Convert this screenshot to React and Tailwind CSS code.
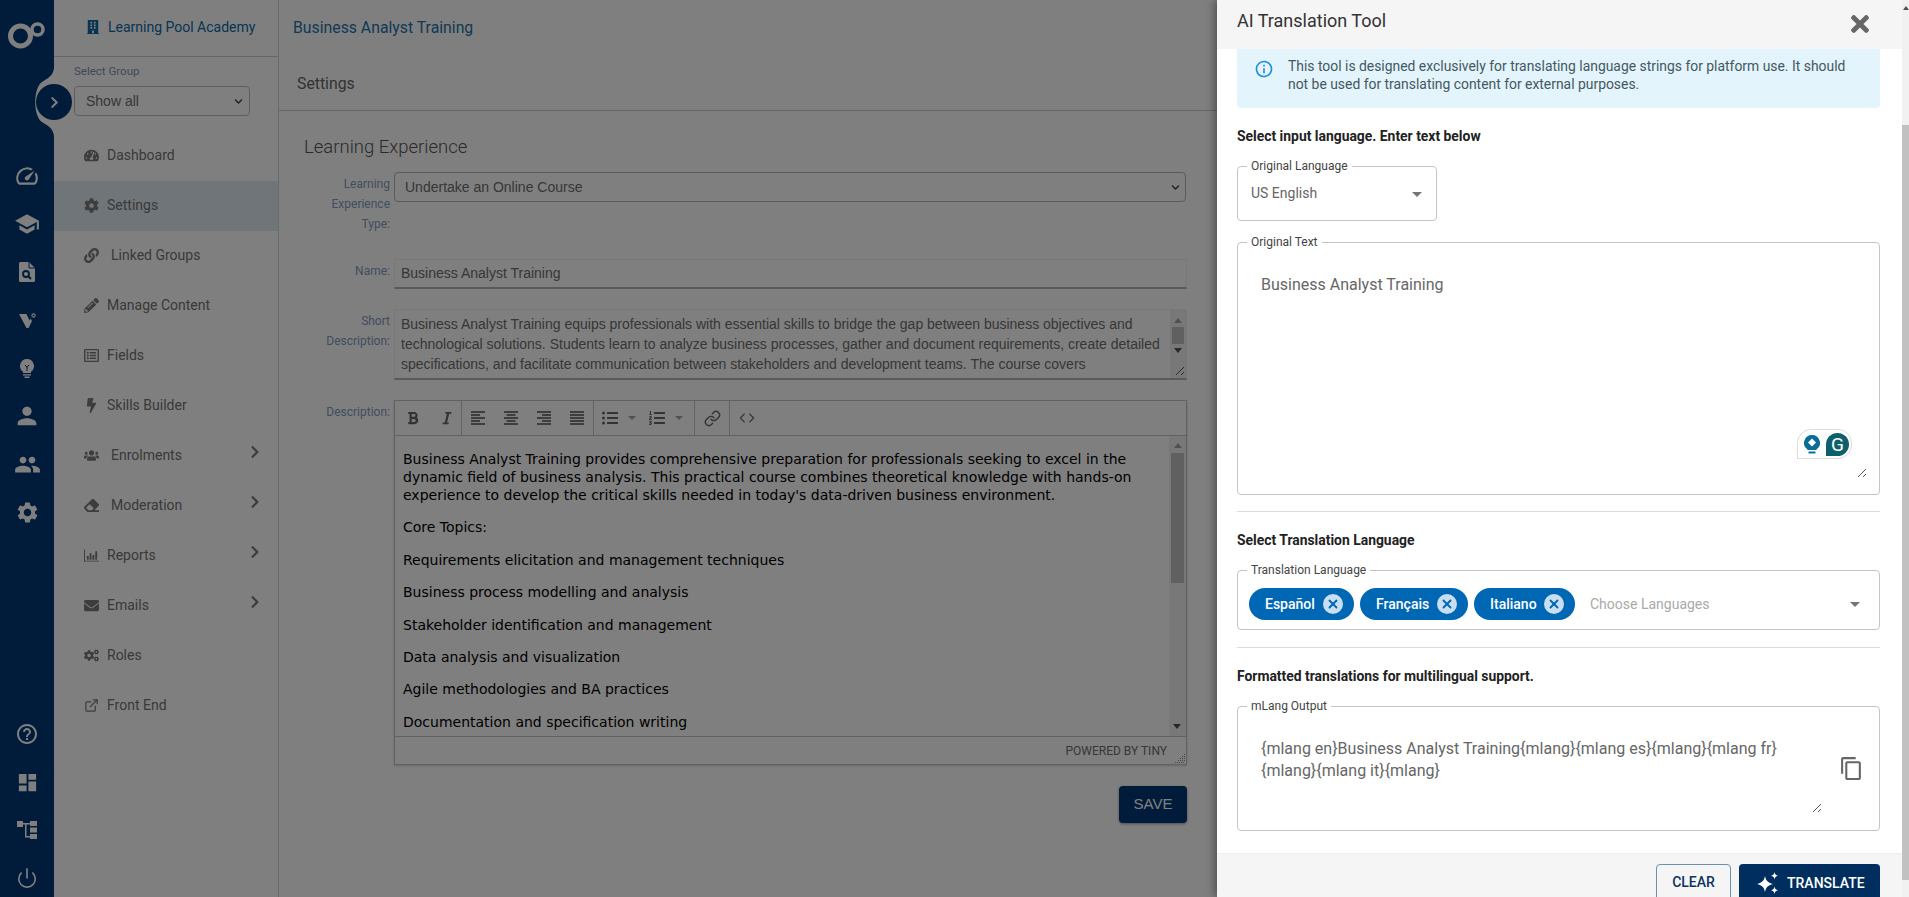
import React from "react";
import {
  FaTachometerAlt, FaCog, FaLink, FaPencilAlt, FaRegListAlt, FaBolt, FaUsers, FaEraser,
  FaEnvelope, FaCogs, FaChevronRight, FaBuilding, FaTimes,
  FaBold, FaItalic, FaListUl, FaListOl, FaChevronDown,
} from "react-icons/fa";
import {
  MdPerson, MdPeople, MdSettings, MdHelpOutline, MdDashboard, MdSpeed, MdSchool,
  MdOutlineContentCopy, MdOutlineInfo,
} from "react-icons/md";
import { Power, X, Link, Code, ExternalLink } from "lucide-react";

function ChartIcon() {
  return (
    <svg width="16" height="13" viewBox="0 0 16 13" fill="currentColor">
      <path d="M0 0h1v12h15v1H0zM3 7h2v4H3zM6 4h2v7H6zM9 6h2v5H9zM12 2h2v9h-2z" />
    </svg>
  );
}

const NAV = [
  { label: "Dashboard", icon: FaTachometerAlt },
  { label: "Settings", icon: FaCog, active: true },
  { label: "Linked Groups", icon: FaLink, wide: true },
  { label: "Manage Content", icon: FaPencilAlt },
  { label: "Fields", icon: FaRegListAlt },
  { label: "Skills Builder", icon: FaBolt },
  { label: "Enrolments", icon: FaUsers, wide: true, arrow: true },
  { label: "Moderation", icon: FaEraser, wide: true, arrow: true },
  { label: "Reports", icon: ChartIcon, arrow: true },
  { label: "Emails", icon: FaEnvelope, arrow: true },
  { label: "Roles", icon: FaCogs },
  { label: "Front End", icon: ExternalLink },
];

const TOPICS = [
  "Core Topics:",
  "Requirements elicitation and management techniques",
  "Business process modelling and analysis",
  "Stakeholder identification and management",
  "Data analysis and visualization",
  "Agile methodologies and BA practices",
  "Documentation and specification writing",
];

function Logo() {
  return (
    <svg width="38" height="27" viewBox="0 0 38 27" fill="none" stroke="#fff">
      <circle cx="12.5" cy="14" r="10" strokeWidth="5" />
      <circle cx="29.5" cy="7.5" r="5.5" strokeWidth="3.5" />
    </svg>
  );
}

function VMark() {
  return (
    <svg width="17" height="15" viewBox="0 0 17 15" fill="#fff">
      <path d="M0 1h7.500l3 6.500 1-2 1.500 2.500-3.500 7H7.500z" />
      <circle cx="14.500" cy="2.500" r="1.600" fill="none" stroke="#fff" strokeWidth="1.100" />
    </svg>
  );
}

function TreeMark() {
  return (
    <svg width="20" height="18" viewBox="0 0 20 18" fill="#fff">
      <path d="M0 0h6v6H0zM13 0h7v5h-7zM13 6.500h7v5h-7zM13 13h7v5h-7z" />
      <path d="M6 2h7v1.500H9.500V15H13v1.500H8V3.500H6z" />
    </svg>
  );
}

function DocSearch() {
  return (
    <svg width="16" height="20" viewBox="0 0 16 20">
      <path d="M1.500 0H10l6 6v12.500a1.500 1.500 0 0 1-1.500 1.500h-13A1.500 1.500 0 0 1 0 18.500v-17A1.500 1.500 0 0 1 1.500 0z" fill="#fff" />
      <path d="M10 0v6h6" fill="none" stroke="#003874" strokeWidth="1" />
      <circle cx="7" cy="12" r="3" fill="none" stroke="#003874" strokeWidth="1.800" />
      <line x1="9.200" y1="14.200" x2="12" y2="17" stroke="#003874" strokeWidth="2" />
    </svg>
  );
}

function BulbMark() {
  return (
    <svg width="14" height="19" viewBox="0 0 14 19">
      <path d="M7 0a7 7 0 0 1 4 12.700V14H3v-1.300A7 7 0 0 1 7 0z" fill="#fff" />
      <path d="M3 15.200h8v1.300H3zM4.500 17.500h5V19h-5z" fill="#fff" />
      <path d="M5 6l2 2.200L9 6M7 8v4" fill="none" stroke="#003874" strokeWidth="1" />
    </svg>
  );
}

function RailIcon({ children }) {
  return <div className="flex h-[48px] w-full items-center justify-center text-white">{children}</div>;
}

function Rail() {
  return (
    <aside className="flex h-full w-[54px] shrink-0 flex-col items-center bg-[#003874]">
      <div className="mt-[22px] h-[130px]">
        <Logo />
      </div>
      <RailIcon><MdSpeed size={26} /></RailIcon>
      <RailIcon><MdSchool size={26} /></RailIcon>
      <RailIcon><DocSearch /></RailIcon>
      <RailIcon><VMark /></RailIcon>
      <RailIcon><BulbMark /></RailIcon>
      <RailIcon><MdPerson size={28} /></RailIcon>
      <RailIcon><MdPeople size={27} /></RailIcon>
      <RailIcon><MdSettings size={25} /></RailIcon>
      <div className="mt-auto mb-[-5px] flex w-full flex-col">
        <RailIcon><MdHelpOutline size={24} /></RailIcon>
        <RailIcon><MdDashboard size={23} /></RailIcon>
        <RailIcon><TreeMark /></RailIcon>
        <RailIcon><Power size={22} strokeWidth={1.8} /></RailIcon>
      </div>
    </aside>
  );
}

function RailToggle() {
  return (
    <>
      <svg className="absolute left-[30px] top-[68px]" width="24" height="68" viewBox="0 0 24 68" fill="#fff">
        <path d="M24 0c-1 8-6 10-12 14C3 20 3 48 12 54c6 4 11 6 12 14z" />
      </svg>
      <div className="absolute left-[36px] top-[84px] flex h-[36px] w-[36px] items-center justify-center rounded-full bg-[#003874] text-white">
        <FaChevronRight size={13} />
      </div>
    </>
  );
}

function Sidebar() {
  return (
    <nav className="h-full w-[225px] shrink-0 border-r border-[#d4d4d4] bg-white">
      <div className="flex h-[57px] items-center gap-[10px] border-b border-[#cfcfcf] pb-[2px] pl-[32px] font-['Roboto'] text-[14px] text-[#0d6aa8]">
        <FaBuilding size={14} />
        <span className="-ml-[2px]">Learning Pool Academy</span>
      </div>
      <div className="pl-[20px] pt-[7px]">
        <div className="font-['Roboto'] text-[11.5px] leading-[14px] text-[#7d93ae]">Select Group</div>
        <div className="mt-[8px] flex h-[30px] w-[176px] items-center justify-between rounded-[4px] border border-[#bdbdbd] pl-[11px] pr-[6px] font-['Liberation_Sans'] text-[14px] text-[#6e6e6e]">
          Show all
          <FaChevronDown size={9} className="text-[#444]" />
        </div>
      </div>
      <ul className="mt-[15px]">
        {NAV.map((item) => (
          <li
            key={item.label}
            className={`relative flex h-[50px] items-center pb-[2px] pl-[30px] font-['Roboto'] text-[14px] text-[#737373] ${item.active ? "bg-[#dfebf3]" : ""}`}
          >
            <span className="flex w-[15px] justify-center text-[14px] text-[#7a7a7a]"><item.icon size={15} /></span>
            <span className={item.wide ? "ml-[12px]" : "ml-[8px]"}>{item.label}</span>
            {item.arrow && <FaChevronRight size={14} className="absolute left-[194px] top-[14px] text-[#7a7a7a]" />}
          </li>
        ))}
      </ul>
    </nav>
  );
}

function Bars({ kind }) {
  const lines = {
    left: [[1, 14], [1, 9], [1, 14], [1, 9], [1, 14]],
    center: [[1, 14], [3.5, 9], [1, 14], [3.5, 9], [1, 14]],
    right: [[1, 14], [6, 9], [1, 14], [6, 9], [1, 14]],
    justify: [[1, 14], [1, 14], [1, 14], [1, 14], [1, 14]],
  }[kind];
  return (
    <svg width="16" height="14" viewBox="0 0 16 14" stroke="#666" strokeWidth="1.7">
      {lines.map(([x, w], i) => <line key={i} x1={x} x2={x + w} y1={1 + i * 3} y2={1 + i * 3} />)}
    </svg>
  );
}

function Caret() {
  return <span className="ml-[10px] h-0 w-0 border-x-[4px] border-t-[4px] border-x-transparent border-t-[#a3a3a3]" />;
}

function Editor() {
  return (
    <div className="h-[365px] w-[793px] border border-[#c4c4c4] shadow-[0_1px_2px_rgba(0,0,0,.2)]">
      <div className="flex h-[35px] items-center border-b border-[#c4c4c4] text-[#666]">
        <div className="flex h-full w-[67px] items-center gap-[20px] border-r border-[#c9c9c9] pl-[11px] text-[14px]">
          <FaBold /><FaItalic />
        </div>
        <div className="flex h-full w-[132px] items-center justify-between border-r border-[#c9c9c9] px-[8px]">
          <Bars kind="left" /><Bars kind="center" /><Bars kind="right" /><Bars kind="justify" />
        </div>
        <div className="flex h-full w-[101px] items-center border-r border-[#c9c9c9] pl-[8px] text-[16px]">
          <FaListUl />
          <Caret />
          <FaListOl className="ml-[13px]" />
          <Caret />
        </div>
        <div className="flex h-full w-[35px] items-center justify-center border-r border-[#c9c9c9]">
          <Link size={17} />
        </div>
        <Code size={16} strokeWidth={1.6} className="ml-[9px]" />
      </div>
      <div className="relative h-[301px] overflow-hidden border-b border-[#c4c4c4] px-[8px] pt-[14px] font-['DejaVu_Sans'] text-[14px] leading-[18px] text-black">
        <p className="w-[760px]">
          Business Analyst Training provides comprehensive preparation for professionals seeking to excel in the dynamic field of business analysis. This practical course combines theoretical knowledge with hands-on experience to develop the critical skills needed in today's data-driven business environment.
        </p>
        {TOPICS.map((t) => <p key={t} className="mt-[14.4px]">{t}</p>)}
        <div className="absolute inset-y-0 right-0 w-[17px] bg-[#f1f1f1]">
          <div className="mx-auto mt-[7px] h-0 w-0 border-x-[4px] border-b-[5px] border-x-transparent border-b-[#a3a3a3]" />
          <div className="ml-[2px] mt-[5px] h-[130px] w-[13px] bg-[#c1c1c1]" />
          <div className="absolute bottom-[7px] left-[4px] h-0 w-0 border-x-[4px] border-t-[5px] border-x-transparent border-t-[#505050]" />
        </div>
      </div>
      <div className="relative flex h-[27px] items-center justify-end pr-[19px] font-['Roboto'] text-[12px] text-[#6e6e6e]">
        POWERED BY TINY
        <svg className="absolute bottom-[1px] right-[1px]" width="10" height="10" viewBox="0 0 10 10" fill="none" stroke="#888" strokeWidth="1" strokeDasharray="1 1">
          <path d="M0 9.500h10M3 7.500h7M5 5.500h5M7 3.500h3M9 1.500h1" />
        </svg>
      </div>
    </div>
  );
}

function FormLabel({ children }) {
  return <div className="w-[112px] shrink-0 pr-[4px] pt-[2px] text-right font-['Roboto'] text-[12px] leading-[20px] text-[#7f9cc0]">{children}</div>;
}

function Main() {
  return (
    <main className="h-full min-w-0 flex-1 bg-white">
      <div className="flex h-[56px] items-center pl-[14px] font-['Roboto'] text-[15.8px] text-[#1f72aa]">Business Analyst Training</div>
      <div className="flex h-[55px] items-center border-b border-[#cfcfcf] pl-[18px] pt-[1px] font-['Roboto'] text-[15.8px] text-[#666]">Settings</div>
      <div className="pl-[3px]">
        <h2 className="pl-[22px] pt-[24px] font-['Roboto'] text-[18.5px] font-light leading-[24px] text-[#555]">Learning Experience</h2>
        <div className="mt-[13px] flex">
          <FormLabel>Learning<br />Experience<br />Type:</FormLabel>
          <div className="flex h-[30px] w-[792px] items-center justify-between rounded-[4px] border border-[#b5b5b5] pl-[10px] pr-[5px] font-['Liberation_Sans'] text-[14px] text-[#6e6e6e]">
            Undertake an Online Course
            <FaChevronDown size={9} className="text-[#444]" />
          </div>
        </div>
        <div className="mt-[25px] flex">
          <FormLabel>Name:</FormLabel>
          <div className="flex h-[30px] w-[793px] items-center border border-b-2 border-[#f0f0f0] border-b-[#b5b5b5] pl-[6px] font-['Liberation_Sans'] text-[14px] text-[#6e6e6e]">
            Business Analyst Training
          </div>
        </div>
        <div className="mt-[20px] flex">
          <FormLabel>Short<br />Description:</FormLabel>
          <div className="relative h-[71px] w-[793px] overflow-hidden border border-b-2 border-[#f0f0f0] border-b-[#b5b5b5] pl-[6px] pt-[4px] font-['Liberation_Sans'] text-[14px] leading-[20px] text-[#6e6e6e]">
            <p className="w-[770px]">
              Business Analyst Training equips professionals with essential skills to bridge the gap between business objectives and technological solutions. Students learn to analyze business processes, gather and document requirements, create detailed specifications, and facilitate communication between stakeholders and development teams. The course covers
            </p>
            <div className="absolute inset-y-0 right-0 w-[16px] bg-[#f1f1f1]">
              <div className="mx-auto mt-[8px] h-0 w-0 border-x-[4px] border-b-[5px] border-x-transparent border-b-[#a3a3a3]" />
              <div className="ml-[2px] mt-[4px] h-[17px] w-[12px] bg-[#c1c1c1]" />
              <div className="mx-auto mt-[4px] h-0 w-0 border-x-[4px] border-t-[5px] border-x-transparent border-t-[#505050]" />
            </div>
            <ResizeGrip className="absolute bottom-[2px] right-[1px]" />
          </div>
        </div>
        <div className="mt-[20px] flex">
          <FormLabel>Description:</FormLabel>
          <Editor />
        </div>
        <div className="mt-[21px] flex w-[905px] justify-end">
          <button className="h-[37px] w-[68px] rounded-[4px] bg-[#003874] font-['Liberation_Sans'] text-[15px] text-white shadow-[0_1px_3px_rgba(0,0,0,.4)]">SAVE</button>
        </div>
      </div>
    </main>
  );
}

function ResizeGrip({ className = "" }) {
  return (
    <svg className={className} width="10" height="10" viewBox="0 0 10 10" stroke="#555" strokeWidth="1">
      <line x1="1" y1="9" x2="9" y2="1" />
      <line x1="6" y1="9" x2="9" y2="6" />
    </svg>
  );
}

function Outlined({ label, className = "", children }) {
  return (
    <div className={`relative rounded-[4px] border border-[#c4c4c4] ${className}`}>
      <span className="absolute -top-[8px] left-[9px] bg-white px-[4px] font-['Roboto'] text-[12px] leading-[14px] text-[#444]">{label}</span>
      {children}
    </div>
  );
}

function Arrow({ className = "" }) {
  return <span className={`h-0 w-0 border-x-[5px] border-t-[5px] border-x-transparent border-t-[#757575] ${className}`} />;
}

function Chip({ label, width }) {
  return (
    <div className={`flex h-[32px] items-center justify-between rounded-full bg-[#0067b5] pl-[16px] pr-[11px] font-['Roboto'] text-[14px] font-medium text-white ${width}`}>
      {label}
      <span className="flex h-[20px] w-[20px] items-center justify-center rounded-full bg-[#c9dff1] text-[#0067b5]">
        <X size={14} strokeWidth={3.2} />
      </span>
    </div>
  );
}

function Sparkle() {
  return (
    <svg width="22" height="22" viewBox="0 0 22 22" fill="#fff">
      <path d="M8 4c.9 4.600 2.700 6.400 8 8-5.300 1.600-7.100 3.400-8 8-.9-4.600-2.700-6.400-8-8 5.300-1.600 7.100-3.400 8-8z" />
      <path d="M17.500 0c.4 2.200 1.200 3 3.500 3.700-2.300.7-3.100 1.500-3.500 3.700-.4-2.200-1.200-3-3.500-3.700 2.300-.7 3.100-1.500 3.500-3.700z" />
      <path d="M17.500 14.600c.4 2.200 1.200 3 3.500 3.700-2.300.7-3.100 1.500-3.500 3.700-.4-2.200-1.200-3-3.500-3.700 2.300-.7 3.100-1.500 3.500-3.700z" />
    </svg>
  );
}

function GrammarlyBadge() {
  return (
    <div className="absolute bottom-[35px] right-[27px] flex h-[30px] w-[55px] items-center gap-[6px] rounded-[14px] rounded-bl-none border border-[#dcdcdc] bg-white pl-[6px]">
      <svg width="16" height="19" viewBox="0 0 16 19">
        <path d="M8 0a8 8 0 0 1 4.500 14.600V15h-9v-.4A8 8 0 0 1 8 0z" fill="#0a6c97" />
        <path d="M8 3.500 12 7.500 8 11.500 4 7.500z" fill="#fff" />
        <path d="M4.500 16.500h7V18.500h-7z" fill="#0a6c97" />
      </svg>
      <span className="flex h-[23px] w-[23px] items-center justify-center rounded-full rounded-bl-none bg-[#0e5f6e] font-['Roboto'] text-[19px] leading-none text-white">G</span>
    </div>
  );
}

function SectionTitle({ children, className = "" }) {
  return <h3 className={`pt-[1px] font-['Roboto'] text-[13.9px] font-bold leading-[19px] text-[#222] ${className}`}>{children}</h3>;
}

function Drawer() {
  return (
    <section className="absolute right-0 top-0 flex h-full w-[692px] flex-col bg-white shadow-[-3px_0_8px_rgba(0,0,0,.35)]">
      <header className="flex h-[49px] shrink-0 items-start justify-between bg-[#f5f5f5] pl-[20px] pr-[36px] text-[#333]">
        <h2 className="mt-[8px] font-['Roboto'] text-[18px] leading-[26px]">AI Translation Tool</h2>
        <FaTimes size={26} className="mt-[11px] text-[#666]" />
      </header>

      <div className="min-h-0 flex-1 overflow-hidden pl-[20px]">
        <div className="w-[643px]">
          <div className="flex h-[59px] gap-[14px] rounded-b-[4px] bg-[#e3f4fc] pl-[17px] pt-[8px]">
            <MdOutlineInfo size={20} className="mt-[2px] shrink-0 text-[#1f8fd8]" />
            <p className="w-[570px] font-['Roboto'] text-[13.9px] leading-[18px] text-[#44585f]">
              This tool is designed exclusively for translating language strings for platform use. It should not be used for translating content for external purposes.
            </p>
          </div>

          <SectionTitle className="mt-[18px]">Select input language. Enter text below</SectionTitle>
          <Outlined label="Original Language" className="mt-[20px] flex h-[55px] w-[200px] items-start justify-between pl-[13px] pr-[14px] pt-[17px]">
            <span className="font-['Roboto'] text-[14px] leading-[18px] text-[#666]">US English</span>
            <Arrow className="mt-[8px]" />
          </Outlined>

          <Outlined label="Original Text" className="mt-[21px] h-[253px] pl-[23px] pt-[29px]">
            <span className="font-['Roboto'] text-[16px] leading-[22px] text-[#666]">Business Analyst Training</span>
            <GrammarlyBadge />
            <ResizeGrip className="absolute bottom-[16px] right-[12px]" />
          </Outlined>

          <hr className="mt-[16px] border-[#ddd]" />
          <SectionTitle className="mt-[18px]">Select Translation Language</SectionTitle>
          <Outlined label="Translation Language" className="mt-[20px] flex h-[60px] items-center gap-[6px] pl-[11px] pr-[19px] pt-[8px]">
            <Chip label="Español" width="w-[105px]" />
            <Chip label="Français" width="w-[108px]" />
            <Chip label="Italiano" width="w-[101px]" />
            <span className="ml-[9px] font-['Roboto'] text-[14px] text-[#aaa]">Choose Languages</span>
            <Arrow className="ml-auto" />
          </Outlined>

          <hr className="mt-[17px] border-[#ddd]" />
          <SectionTitle className="mt-[18px]">Formatted translations for multilingual support.</SectionTitle>
          <Outlined label="mLang Output" className="mt-[20px] h-[125px] pl-[23px] pt-[31px]">
            <p className="font-['Roboto'] text-[16px] leading-[22px] text-[#666]">
              {"{mlang en}Business Analyst Training{mlang}{mlang es}{mlang}{mlang fr}"}
              <br />
              {"{mlang}{mlang it}{mlang}"}
            </p>
            <MdOutlineContentCopy size={25} className="absolute right-[15px] top-[49px] text-[#666]" />
            <ResizeGrip className="absolute bottom-[17px] right-[57px]" />
          </Outlined>
        </div>
      </div>

      <footer className="flex h-[44px] shrink-0 items-start justify-end gap-[8px] overflow-hidden border-t border-[#eee] bg-[#f5f5f5] pr-[29px] pt-[10px] font-['Roboto'] text-[14px] font-medium">
        <button className="h-[40px] w-[75px] rounded-[4px] border border-[#6d8fb0] pb-[4px] text-[#0c3462]">CLEAR</button>
        <button className="flex h-[40px] w-[141px] items-start gap-[8px] rounded-[4px] bg-[#002f5f] pl-[18px] pt-[8px] text-white">
          <Sparkle />
          <span className="mt-[1px]">TRANSLATE</span>
        </button>
      </footer>

      <div className="absolute inset-y-0 right-0 w-[7px] bg-[#f1f1f1]">
        <div className="absolute left-[1px] top-[6px] h-0 w-0 border-x-[3px] border-b-[4px] border-x-transparent border-b-[#505050]" />
        <div className="mt-[125px] h-[755px] bg-[#c1c1c1]" />
      </div>
    </section>
  );
}

export default function App() {
  return (
    <div className="relative flex h-[897px] w-full overflow-hidden">
      <Rail />
      <RailToggle />
      <Sidebar />
      <Main />
      <div className="absolute inset-0 bg-black/50" />
      <Drawer />
    </div>
  );
}
